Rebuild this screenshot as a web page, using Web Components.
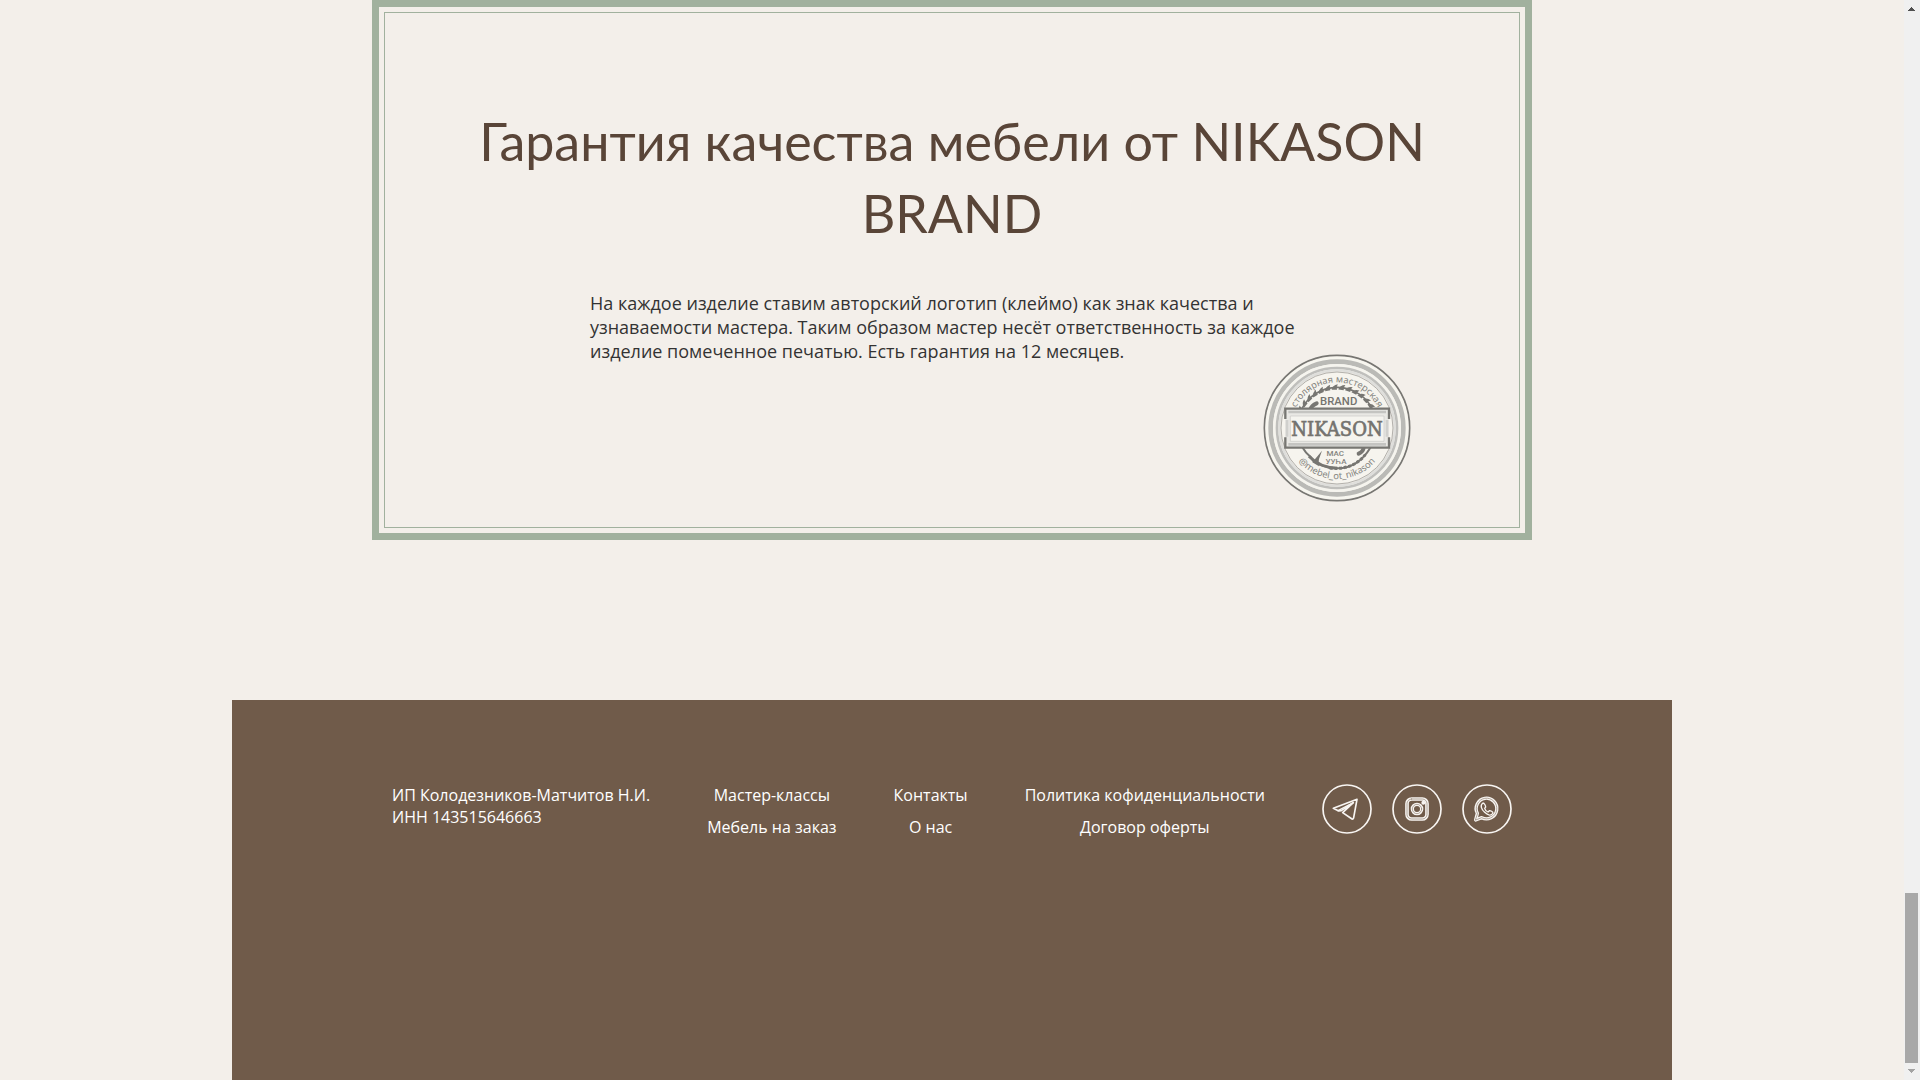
<!DOCTYPE html>
<html lang="ru">
<head>
<meta charset="utf-8">
<title>NIKASON BRAND</title>
<style>
  html, body { height: 100%; }
  body { margin: 0; background: #f3efea; font-family: "Open Sans", "Noto Sans", sans-serif; overflow: hidden; }
</style>
</head>
<body>
<nk-page>
  <nk-guarantee>
    <span slot="title">Гарантия качества мебели от NIKASON BRAND</span>
    На каждое изделие ставим авторский логотип (клеймо) как знак качества и узнаваемости мастера. Таким образом мастер несёт ответственность за каждое изделие помеченное печатью. Есть гарантия на 12 месяцев.
    <nk-stamp slot="stamp"></nk-stamp>
  </nk-guarantee>
  <nk-footer></nk-footer>
</nk-page>

<script>
const define = (name, html, setup) => {
  const template = document.createElement('template');
  template.innerHTML = html;
  customElements.define(name, class extends HTMLElement {
    constructor() {
      super();
      const root = this.attachShadow({ mode: 'open' });
      root.append(template.content.cloneNode(true));
      if (setup) setup(root);
    }
  });
};

define('nk-scrollbar', `
  <style>
    :host { display: flex; flex-direction: column; align-items: center; flex: none; width: 16px; box-sizing: border-box; padding: 7px 1px 7px 0; background: #f0f0f0; }
    svg { display: block; flex: none; width: 7px; height: 4px; }
    .before { flex: 882; }
    .thumb { flex: 170; width: 13px; background: #a8a8a8; }
    .after { flex: 6; }
  </style>
  <svg viewBox="0 0 7 4"><path d="M0 4V3h1V2h1V1h1V0h1v1h1v1h1v1h1v1z" fill="#505050"/></svg>
  <div class="before"></div><div class="thumb"></div><div class="after"></div>
  <svg viewBox="0 0 7 4"><path d="M0 0v1h1v1h1v1h1v1h1V3h1V2h1V1h1V0z" fill="#a3a3a3"/></svg>
`);

define('nk-page', `
  <style>
    :host { display: flex; height: 100vh; }
    main { flex: 1; min-width: 0; display: flex; flex-direction: column; align-items: center; gap: 160px; overflow: hidden; }
  </style>
  <main><slot></slot></main>
  <nk-scrollbar></nk-scrollbar>
`);

define('nk-guarantee', `
  <style>
    :host { display: block; flex: none; box-sizing: border-box; width: 100%; max-width: 1160px; border: 7px solid #a1b19e; padding: 5px; }
    section { display: flex; flex-direction: column; align-items: center; border: 1px solid #a1b19e; padding: 92px 60px 25px; }
    h2 { margin: 0; font: 400 52px/72px Lato, "Open Sans", sans-serif; color: #594538; text-align: center; }
    p { margin: 42px 0 0; max-width: 724px; font-size: 18px; line-height: 24px; color: #333; }
    .stamp { align-self: flex-end; margin: -9px 48px 0 0; }
  </style>
  <section>
    <h2><slot name="title"></slot></h2>
    <p><slot></slot></p>
    <div class="stamp"><slot name="stamp"></slot></div>
  </section>
`);

define('nk-stamp', `
  <style>
    :host { display: block; width: 148px; height: 148px; }
    svg { display: block; width: 100%; height: 100%; }
    .ring { font: 400 28px "Noto Sans", sans-serif; fill: #858480; }
    .name { font: 400 60px "DejaVu Serif Condensed", "DejaVu Serif", serif; fill: #74736f; stroke: #74736f; stroke-width: 2; }
    .brand { font: 500 34px Roboto, sans-serif; fill: #74736f; }
    .sub { font: 500 24px Roboto, sans-serif; fill: #858480; }
  </style>
  <svg viewBox="0 0 444 444" text-anchor="middle" role="img" aria-label="Клеймо NIKASON">
    <defs>
      <path id="top" d="M85 222a137 137 0 0 1 274 0"/>
      <path id="bottom" d="M69 222a153 153 0 0 0 306 0"/>
    </defs>
    <g fill="none">
      <circle cx="222" cy="222" r="218" stroke="#777672" stroke-width="5"/>
      <circle cx="222" cy="222" r="210" stroke="#f7f6ef" stroke-width="8"/>
      <circle cx="222" cy="222" r="199" stroke="#babab6" stroke-width="14"/>
      <circle cx="222" cy="222" r="188" stroke="#f5f4ee" stroke-width="8"/>
      <circle cx="222" cy="222" r="180" stroke="#bfbfbc" stroke-width="8"/>
      <circle cx="222" cy="222" r="173" stroke="#dededb" stroke-width="7"/>
      <circle cx="222" cy="222" r="168" stroke="#8f8e8a" stroke-width="2" fill="#f6f4ee"/>
      <path d="M114 170a119 119 0 0 1 218 3" stroke="#777672" stroke-width="5"/>
      <path d="M118 280q10 18 26 30l6 10q32 23 75 23q60 0 98-63" stroke="#777672" stroke-width="6"/>
      <path d="M138 307q32 34 84 36" stroke="#777672" stroke-width="9"/>
      <path d="M200 342q68 8 107-40" stroke="#777672" stroke-width="9" stroke-dasharray="9 5"/>
      <path d="M142 166q4-12 19-18" stroke="#777672" stroke-width="12" stroke-linecap="round"/>
      <path d="M302 280q-1 13-15 19" stroke="#777672" stroke-width="12" stroke-linecap="round"/>
    </g>
    <path d="M148 325l14-17 15-18-9 25q-3 12 0 22z" fill="#777672"/>
    <g id="teeth" fill="#777672"></g>
    <path d="M67 165h311v116H67z" fill="#e9e8e4"/>
    <path d="M67 195v-31h311v31M67 250v31h311v-31" fill="none" stroke="#777672" stroke-width="7"/>
    <path d="M76 174h293M76 271h293" stroke="#c4c4c1" stroke-width="8"/>
    <path d="M72 198v50M372 198v50" stroke="#d0d0cd" stroke-width="8"/>
    <path d="M82 186h281v76H82z" fill="#f5f4ef" stroke="#c9c9c6" stroke-width="2"/>
    <text class="name" x="222" y="246">NIKASON</text>
    <text class="brand" x="227" y="154">BRAND</text>
    <text class="sub" x="217" y="306">МАС</text>
    <text class="sub" x="219" y="331">УУҺА</text>
    <text class="ring"><textPath href="#top" startOffset="50%">столярная мастерская</textPath></text>
    <text class="ring"><textPath href="#bottom" startOffset="50%">@mebel_ot_nikason</textPath></text>
  </svg>
`, root => {
  /* Saw teeth along the upper arc of the blade. */
  const teeth = root.getElementById('teeth');
  for (let angle = -62; angle <= 62; angle += 10) {
    const tooth = document.createElementNS('http://www.w3.org/2000/svg', 'path');
    tooth.setAttribute('d', 'M210 107q2-13 19-16q-5 7-3 16z');
    tooth.setAttribute('transform', 'rotate(' + angle + ' 222 222)');
    teeth.append(tooth);
  }
});

define('nk-links', `
  <style>
    :host { display: flex; flex-direction: column; align-items: center; gap: 10px; }
    ::slotted(a) { color: inherit; text-decoration: none; white-space: nowrap; }
  </style>
  <slot></slot>
`);

define('nk-social', `
  <style>
    :host { display: block; }
    nav { display: flex; gap: 20px; }
    a { display: block; width: 50px; height: 50px; }
    svg { display: block; width: 100%; height: 100%; fill: none; stroke: #f8f5f2; stroke-linejoin: round; stroke-linecap: round; }
    .thin { stroke: #8d7b6c; stroke-width: 2; }
  </style>
  <nav>
    <a href="#telegram" aria-label="Telegram">
      <svg viewBox="0 0 150 150"><circle cx="75" cy="75" r="72" stroke-width="5"/>
        <path d="M105 46L34 73l16 8 8-1 36-24-32 30 28 19q4 1 5-4z" stroke-width="5"/><path d="M48 80l46-24" stroke-width="4"/></svg>
    </a>
    <a href="#instagram" aria-label="Instagram">
      <svg viewBox="0 0 150 150"><circle cx="75" cy="75" r="72" stroke-width="5"/>
        <rect x="45" y="45" width="60" height="60" rx="14" stroke-width="11"/><rect x="45" y="45" width="60" height="60" rx="14" class="thin"/>
        <circle cx="75" cy="75" r="14" stroke-width="10"/><circle cx="75" cy="75" r="14" class="thin"/>
        <circle cx="94" cy="56" r="3" stroke-width="6"/></svg>
    </a>
    <a href="#whatsapp" aria-label="WhatsApp">
      <svg viewBox="0 0 150 150"><circle cx="75" cy="75" r="72" stroke-width="5"/>
        <path d="M46 88a31 31 0 1 1 13 13l-18 7z" stroke-width="10"/><path d="M46 88a31 31 0 1 1 13 13l-18 7z" class="thin"/>
        <path d="M63 57c-10 7-5 19 5 28s20 12 25 2c0-4-8-8-11-7l-4 4c-5-2-9-7-10-11l3-4c0-4-4-12-8-12z" stroke-width="4"/></svg>
    </a>
  </nav>
`);

define('nk-footer', `
  <style>
    :host { display: block; flex: 1 0 auto; box-sizing: border-box; width: 100%; max-width: 1440px; padding: 84px 160px; background: #705b4a; color: #fff; font-size: 16px; line-height: 22px; }
    footer { display: flex; justify-content: space-between; align-items: flex-start; }
    address { font-style: normal; }
  </style>
  <footer>
    <address>ИП Колодезников-Матчитов Н.И.<br>ИНН 143515646663</address>
    <nk-links><a href="#classes">Мастер-классы</a><a href="#order">Мебель на заказ</a></nk-links>
    <nk-links><a href="#contacts">Контакты</a><a href="#about">О нас</a></nk-links>
    <nk-links><a href="#policy">Политика кофиденциальности</a><a href="#offer">Договор оферты</a></nk-links>
    <nk-social></nk-social>
  </footer>
`);
</script>
</body>
</html>
